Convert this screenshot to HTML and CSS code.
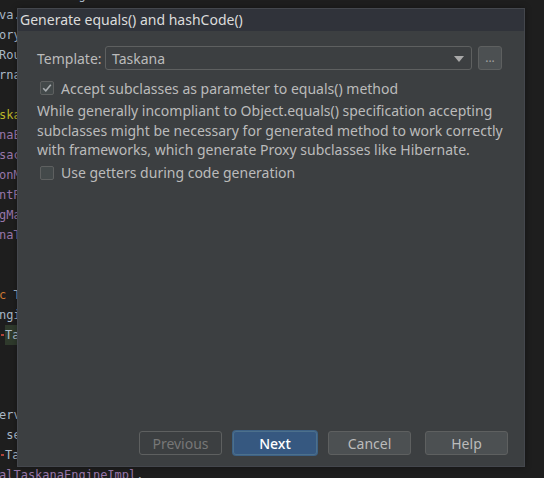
FILE: index.html
```html
<!DOCTYPE html>
<html>
<head>
<meta charset="utf-8">
<link rel="stylesheet" href="styles.css">
</head>
<body>
<div class="editor">
  <div class="line"><span class="plain">           g                        </span><span class="kw">.</span></div>
  <div class="line"><span class="plain">va.</span></div>
  <div class="line"><span class="plain">ory</span></div>
  <div class="line"><span class="plain">Rou</span></div>
  <div class="line"><span class="plain">rna</span></div>
  <div class="line"></div>
  <div class="line"><span class="ann">ska</span></div>
  <div class="line"><span class="fld">naE</span></div>
  <div class="line"><span class="fld">sac</span></div>
  <div class="line"><span class="fld">onM</span></div>
  <div class="line"><span class="fld">ntR</span></div>
  <div class="line"><span class="fld">gMa</span></div>
  <div class="line"><span class="fld">naT</span></div>
  <div class="line"></div>
  <div class="line"></div>
  <div class="line"><span class="kw">c</span><span class="plain"> T</span></div>
  <div class="line"><span class="plain">ngi</span></div>
  <div class="line"><span class="mark"> </span><span class="hl">Ta</span></div>
  <div class="line"></div>
  <div class="line"></div>
  <div class="line"></div>
  <div class="line"><span class="plain">erv</span></div>
  <div class="line"><span class="plain"> se</span></div>
  <div class="line"><span class="mark"> </span><span class="plain">Ta</span></div>
  <div class="line"><span class="fld">alTaskanaEngineImpl</span><span class="plain">.</span></div>
</div>

<div class="dialog">
  <div class="titlebar">Generate equals() and hashCode()</div>
  <div class="content">
    <div class="row template-row">
      <span class="label">Template:</span>
      <div class="combo">
        <span>Taskana</span>
        <svg class="arrow" width="10" height="6" viewBox="0 0 10 6"><path d="M0 0H10L5 6Z" fill="#a9a9a9"/></svg>
      </div>
      <div class="dots">...</div>
    </div>
    <div class="row check-row first">
      <span class="checkbox">
        <svg width="14" height="14" viewBox="0 0 14 14"><path d="M3.2 7.2L5.8 9.8L10.8 3.8" fill="none" stroke="#a9adb0" stroke-width="1.6"/></svg>
      </span>
      <span class="label">Accept subclasses as parameter to equals() method</span>
    </div>
    <p class="desc">While generally incompliant to Object.equals() specification accepting subclasses might be necessary for generated method to work correctly with frameworks, which generate Proxy subclasses like Hibernate.</p>
    <div class="row check-row second">
      <span class="checkbox"></span>
      <span class="label">Use getters during code generation</span>
    </div>
    <div class="spacer"></div>
    <div class="buttons">
      <button class="btn disabled">Previous</button>
      <button class="btn primary">Next</button>
      <button class="btn">Cancel</button>
      <button class="btn help">Help</button>
    </div>
  </div>
</div>
</body>
</html>
```
FILE: styles.css
```css
html, body {
  margin: 0;
  padding: 0;
  width: 544px;
  height: 478px;
  overflow: hidden;
  background: #1e1e1e;
}
.editor {
  margin-top: -15px;
  margin-left: -1px;
  font-family: "DejaVu Sans Mono", monospace;
  font-size: 12px;
}
.line {
  height: 20px;
  line-height: 20px;
  white-space: pre;
}
.plain { color: #a9b7c6; }
.kw { color: #cc7832; }
.fld { color: #9876aa; }
.ann { color: #bbb529; }
.hl { color: #a9b7c6; background: #2f3a2c; display: inline-block; width: 18px; }
.mark { display: inline-block; width: 6px; position: relative; }
.mark::after {
  content: "";
  position: absolute;
  left: 2px; top: 9px;
  width: 3px; height: 2px;
  background: #b0433b;
}
.dialog {
  position: absolute;
  left: 17px;
  top: 8px;
  width: 506px;
  height: 457px;
  border: 1px solid #44474d;
  background: #3c3f41;
  display: flex;
  flex-direction: column;
  font-family: "Noto Sans", sans-serif;
  font-size: 14px;
  color: #bbbbbb;
  box-shadow: 0 0 6px rgba(0,0,0,0.35);
}
.titlebar {
  height: 22px;
  line-height: 22px;
  background: #30333a;
  color: #dcdcdc;
  font-size: 14px;
  padding-left: 2px;
  flex: none;
}
.content {
  flex: 1;
  display: flex;
  flex-direction: column;
  padding: 15px 16px 11px 19px;
}
.row {
  display: flex;
  align-items: center;
}
.template-row {
  height: 24px;
}
.template-row .label {
  width: 68px;
}
.combo {
  width: 352px;
  height: 22px;
  border: 1px solid #5e6060;
  border-radius: 3px;
  display: flex;
  align-items: center;
  justify-content: space-between;
  padding: 0 7px 0 6px;
  box-sizing: content-box;
  margin-right: 6px;
}
.combo span { color: #bbbbbb; }
.arrow { margin-top: 1px; }
.dots {
  width: 22px;
  height: 22px;
  border: 1px solid #5e6060;
  border-radius: 3px;
  background: #4c5052;
  color: #a0a0a0;
  text-align: center;
  line-height: 22px;
  font-size: 12px;
}
.check-row {
  height: 20px;
}
.check-row.first { margin-top: 8px; }
.check-row.second { margin-top: 3px; }
.checkbox {
  width: 12px;
  height: 12px;
  border: 1px solid #5e6060;
  border-radius: 2px;
  background: #43494a;
  margin-left: 3px;
  margin-right: 7px;
  display: flex;
  align-items: center;
  justify-content: center;
}
.checkbox svg { flex: none; }
.desc {
  margin: 3px 0 0 0;
  line-height: 19.5px;
  color: #bbbbbb;
}
.spacer { flex: 1; }
.buttons {
  display: flex;
  justify-content: flex-end;
  gap: 11px;
}
.btn {
  font-family: "Noto Sans", sans-serif;
  font-size: 14px;
  width: 83px;
  height: 24px;
  border: 1px solid #5e6060;
  border-radius: 3px;
  background: #4c5052;
  color: #bbbbbb;
  padding: 0;
}
.btn.disabled {
  background: transparent;
  color: #777777;
}
.btn.primary {
  width: 84px;
  background: #365880;
  border-color: #4c708c;
  color: #ffffff;
  box-shadow: 0 0 0 1px #3d6185;
  font-weight: 500;
}
.btn.help { margin-left: 3px; }
```
